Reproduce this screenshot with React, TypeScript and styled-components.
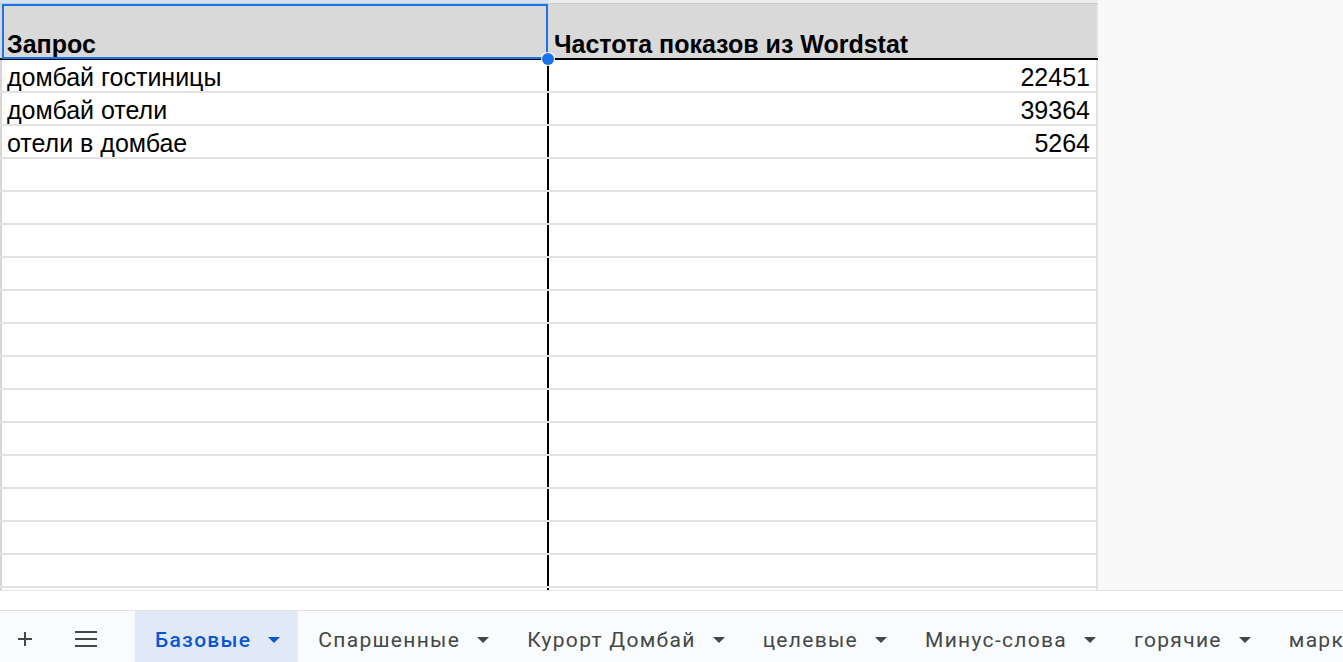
import React from "react";
import styled, {createGlobalStyle} from "styled-components";

const GlobalStyle = createGlobalStyle`
  html, body {
    margin: 0;
    padding: 0;
    overflow: hidden;
    background: #ffffff;
  }
  * {
    box-sizing: border-box;
  }
`;

const COL_A = 549;
const COL_B = 549;

const rows: {query: string; freq: string}[] = [
    {query: "домбай гостиницы", freq: "22451"},
    {query: "домбай отели", freq: "39364"},
    {query: "отели в домбае", freq: "5264"},
];

const EMPTY_ROWS = 14;

const tabs = ["Базовые", "Спаршенные", "Курорт Домбай", "целевые", "Минус-слова", "горячие", "маркетинг"];

const S = {
    Page: styled.div`
      display: flex;
      flex-direction: column;
      height: 100vh;
      width: 100vw;
    `,
    SheetArea: styled.div`
      display: flex;
      height: 590px;
      flex-shrink: 0;
      overflow: hidden;
    `,
    Grid: styled.div`
      position: relative;
      display: flex;
      flex-direction: column;
      width: ${COL_A + COL_B}px;
      flex-shrink: 0;
      background: #ffffff;
    `,
    Outside: styled.div`
      flex: 1;
      background: #f8f9f8;
    `,
    ColStrip: styled.div`
      display: flex;
      flex-shrink: 0;
      height: 4px;
      border-bottom: 1px solid #c9c9c9;
    `,
    ColStripCell: styled.div<{ $w: number; $selected?: boolean }>`
      width: ${p => p.$w}px;
      background: ${p => p.$selected ? "#d3e1f5" : "#ececec"};
    `,
    HeaderRow: styled.div`
      display: flex;
      flex-shrink: 0;
      height: 56px;
      background: #d9d9d9;
      border-bottom: 2px solid #000000;
    `,
    Row: styled.div`
      display: flex;
      flex-shrink: 0;
      height: 33px;
      border-bottom: 2px solid #e2e2e2;
    `,
    Cell: styled.div<{ $w: number; $right?: boolean; $edge: "first" | "last"; $bold?: boolean; $header?: boolean }>`
      width: ${p => p.$w}px;
      display: flex;
      align-items: flex-end;
      justify-content: ${p => p.$right ? "flex-end" : "flex-start"};
      padding: 0 6px 0 5px;
      font-family: "Liberation Sans", Arial, sans-serif;
      font-size: 25px;
      line-height: 28px;
      font-weight: ${p => p.$bold ? 700 : 400};
      color: #000000;
      white-space: nowrap;
      overflow: hidden;
      border-left: ${p => p.$edge === "first" ? "2px solid #d6d6d6" : "none"};
      border-right: ${p => p.$edge === "first"
          ? (p.$header ? "2px solid transparent" : "2px solid #000000")
          : "2px solid #e2e2e2"};
    `,
    Selection: styled.div`
      position: absolute;
      left: 2px;
      top: 4px;
      width: 546px;
      height: 55px;
      border: 2px solid #1a73e8;
      pointer-events: none;
    `,
    Handle: styled.div`
      position: absolute;
      left: 542px;
      top: 53px;
      width: 12px;
      height: 12px;
      border-radius: 50%;
      background: #1a73e8;
      box-shadow: 0 0 0 1px #ffffff;
    `,
    ScrollStrip: styled.div`
      height: 20px;
      flex-shrink: 0;
      background: #ffffff;
      border-top: 1px solid #e3e3e3;
    `,
    TabBar: styled.div`
      flex: 1;
      display: flex;
      align-items: stretch;
      background: #f9fbfd;
      border-top: 1px solid #e1e3e6;
      padding-left: 1px;
      white-space: nowrap;
      overflow: hidden;
    `,
    IconButton: styled.div`
      width: 48px;
      flex-shrink: 0;
      display: flex;
      align-items: center;
      justify-content: center;
      padding-top: 4px;
      color: #444746;
      & + & {
        margin-left: 13px;
      }
    `,
    Tabs: styled.div`
      display: flex;
      flex-shrink: 0;
      margin-left: 25px;
    `,
    Tab: styled.div<{ $active?: boolean }>`
      display: flex;
      align-items: center;
      gap: 17px;
      padding: 6px 18px 0 20px;
      background: ${p => p.$active ? "#e1e9f7" : "transparent"};
      color: ${p => p.$active ? "#0b57d0" : "#444746"};
      font-family: Roboto, "Noto Sans", sans-serif;
      font-size: 21px;
      letter-spacing: 1.3px;
      font-weight: ${p => p.$active ? 500 : 400};
      flex-shrink: 0;
    `,
};

const Caret = () => (
    <svg width="12" height="6" viewBox="0 0 12 6">
        <path d="M0 0 L12 0 L6 6 Z" fill="currentColor"/>
    </svg>
);

const PlusIcon = () => (
    <svg width="18" height="18" viewBox="0 0 18 18">
        <path d="M9 2 V16 M2 9 H16" stroke="currentColor" strokeWidth="2" fill="none"/>
    </svg>
);

const MenuIcon = () => (
    <svg width="24" height="18" viewBox="0 0 24 18">
        <path d="M1 2 H23 M1 9 H23 M1 16 H23" stroke="currentColor" strokeWidth="2" fill="none"/>
    </svg>
);

const App: React.FC = () => {
    return (
        <S.Page>
            <GlobalStyle/>
            <S.SheetArea>
                <S.Grid>
                    <S.ColStrip>
                        <S.ColStripCell $w={COL_A} $selected/>
                        <S.ColStripCell $w={COL_B}/>
                    </S.ColStrip>
                    <S.HeaderRow>
                        <S.Cell $w={COL_A} $edge="first" $bold $header>Запрос</S.Cell>
                        <S.Cell $w={COL_B} $edge="last" $bold>Частота показов из Wordstat</S.Cell>
                    </S.HeaderRow>
                    {rows.map(r => (
                        <S.Row key={r.query}>
                            <S.Cell $w={COL_A} $edge="first">{r.query}</S.Cell>
                            <S.Cell $w={COL_B} $edge="last" $right>{r.freq}</S.Cell>
                        </S.Row>
                    ))}
                    {Array.from({length: EMPTY_ROWS}).map((_, i) => (
                        <S.Row key={i}>
                            <S.Cell $w={COL_A} $edge="first"/>
                            <S.Cell $w={COL_B} $edge="last"/>
                        </S.Row>
                    ))}
                    <S.Selection/>
                    <S.Handle/>
                </S.Grid>
                <S.Outside/>
            </S.SheetArea>
            <S.ScrollStrip/>
            <S.TabBar>
                <S.IconButton><PlusIcon/></S.IconButton>
                <S.IconButton><MenuIcon/></S.IconButton>
                <S.Tabs>
                    {tabs.map((t, i) => (
                        <S.Tab key={t} $active={i === 0}>
                            <span>{t}</span>
                            <Caret/>
                        </S.Tab>
                    ))}
                </S.Tabs>
            </S.TabBar>
        </S.Page>
    );
};

export default App;
